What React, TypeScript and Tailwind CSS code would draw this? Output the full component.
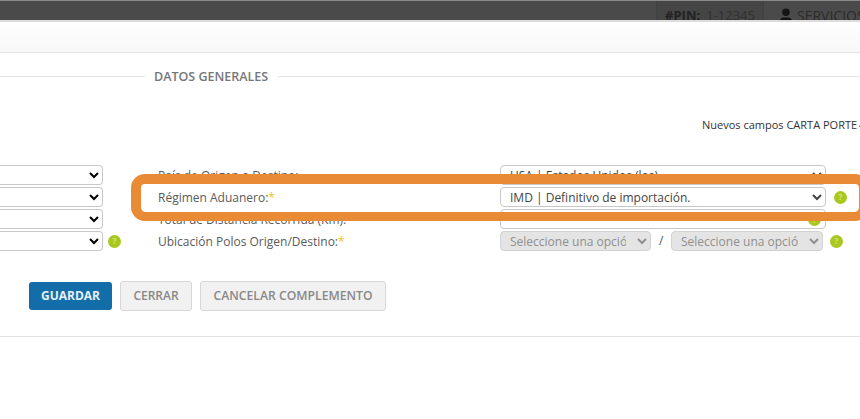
import { User } from "lucide-react";

const font = "font-['Open_Sans','Noto_Sans',sans-serif]";

function Help({ className = "" }: { className?: string }) {
  return (
    <span
      className={`flex h-[13px] w-[13px] shrink-0 items-center justify-center rounded-full bg-[#a8c81f] text-[8px] font-bold leading-none text-[#d3e57a] ${className}`}
    >
      ?
    </span>
  );
}

function Label({ text, required }: { text: string; required?: boolean }) {
  return (
    <label className="h-5 w-[342px] shrink-0 whitespace-nowrap text-[12px] leading-[22px] text-[#5a5a5a]">
      {text}
      {required && <span className="text-[#f0c419]">*</span>}
    </label>
  );
}

function LeftSelect() {
  return (
    <select className="h-5 w-[103px] shrink-0 rounded-r-[4px] border border-l-0 border-[#c8c8c8] bg-white" />
  );
}

function FieldSelect({ value, disabled, className = "" }: { value: string; disabled?: boolean; className?: string }) {
  return (
    <select
      disabled={disabled}
      className={`h-5 rounded-[4px] border pl-[5px] text-[12px] ${
        disabled
          ? "border-[#d2d2d2] bg-[#e4e4e4] pr-[8px] text-[#8f8f8f] opacity-100"
          : "border-[#c8c8c8] bg-white text-[#444444]"
      } ${className}`}
    >
      <option>{value}</option>
    </select>
  );
}

export default function App() {
  return (
    <div className={`relative h-[419px] w-[860px] overflow-hidden bg-white ${font}`}>
      {/* top bar */}
      <div className="flex h-[20px] items-start overflow-hidden border-t border-[#8a8a8a] bg-[#4a4a4a] pl-[656px]">
        <div className="flex h-[22px] w-[108px] shrink-0 items-center justify-center gap-[6px] border-x border-[#414141] bg-[#454545] pt-[8px] text-[13px] text-[#222222]">
          <b>#PIN:</b>
          <span className="text-[#303030]">1-12345</span>
        </div>
        <div className="ml-[13px] flex shrink-0 items-center gap-[2px] whitespace-nowrap pt-[4px] text-[14px] text-[#2a2a2a]">
          <User className="h-[18px] w-[18px] fill-[#141414] text-[#141414]" />
          <span>SERVICIOS</span>
        </div>
      </div>

      {/* toolbar strip */}
      <div className="h-[33px] border-t-2 border-b border-t-[#dcdcdc] border-b-[#e2e2e2] bg-gradient-to-b from-white to-[#f7f7f7]" />

      {/* section title */}
      <div className="mt-[14px] flex h-[18px] items-center">
        <div className="h-px w-[145px] bg-[#e4e4e4]" />
        <span className="ml-[9px] whitespace-nowrap pt-[2px] text-[12.5px] font-semibold text-[#777777]">DATOS GENERALES</span>
        <div className="ml-[10px] h-px flex-1 bg-[#e4e4e4]" />
      </div>

      <div className="mt-[30px] h-[20px] overflow-hidden whitespace-nowrap pl-[702px] text-[11px] leading-[20px] text-[#333333]">
        Nuevos campos CARTA PORTE <span className="-ml-px">4.0</span>
      </div>

      {/* form rows */}
      <div className="mt-[30px] flex flex-col gap-[2px]">
        <div className="flex items-center">
          <LeftSelect />
          <div className="ml-[55px] flex items-center">
            <Label text="País de Origen o Destino:" />
            <FieldSelect value="USA | Estados Unidos (los)" className="w-[326px]" />
          </div>
        </div>
        <div className="flex items-center">
          <LeftSelect />
          <div className="ml-[55px] flex items-center">
            <Label text="Régimen Aduanero:" required />
            <FieldSelect value="IMD | Definitivo de importación." className="w-[326px]" />
            <Help className="ml-2" />
          </div>
        </div>
        <div className="flex items-center">
          <LeftSelect />
          <div className="ml-[55px] flex items-center">
            <Label text="Total de Distancia Recorrida (Km):" />
            <div className="relative h-5 w-[326px] rounded-[4px] border border-[#c8c8c8] bg-white">
              <Help className="absolute right-[4px] top-[3px]" />
            </div>
          </div>
        </div>
        <div className="flex items-center">
          <LeftSelect />
          <Help className="ml-[5px]" />
          <div className="ml-[37px] flex items-center">
            <Label text="Ubicación Polos Origen/Destino:" required />
            <FieldSelect disabled value="Seleccione una opción" className="w-[151px]" />
            <span className="mx-2 w-[4px] text-[12px] text-[#555555]">/</span>
            <FieldSelect disabled value="Seleccione una opción" className="w-[152px]" />
            <Help className="ml-[7px]" />
          </div>
        </div>
      </div>

      {/* buttons */}
      <div className="mt-[30px] flex items-center gap-2 pl-[29px]">
        <button className="h-[28px] w-[83px] rounded-[3px] bg-[#126da8] text-[12px] font-bold text-[#e6f0f7]">GUARDAR</button>
        <button className="h-[30px] w-[72px] rounded-[3px] border border-[#d8d8d8] bg-[#f1f1f1] text-[12px] font-semibold text-[#888888]">CERRAR</button>
        <button className="h-[30px] w-[186px] rounded-[3px] border border-[#d8d8d8] bg-[#f1f1f1] text-[12.2px] font-semibold text-[#888888]">CANCELAR COMPLEMENTO</button>
      </div>

      <div className="mt-[25px] h-px bg-[#e2e2e2]" />

      {/* orange highlight drawn over the form; its right side runs off the page apart from one pixel */}
      <div className="absolute left-[131px] top-[174px] h-[47px] w-[738px] rounded-[14px] border-[10px] border-b-[9px] border-[#e98a35]" />
    </div>
  );
}
